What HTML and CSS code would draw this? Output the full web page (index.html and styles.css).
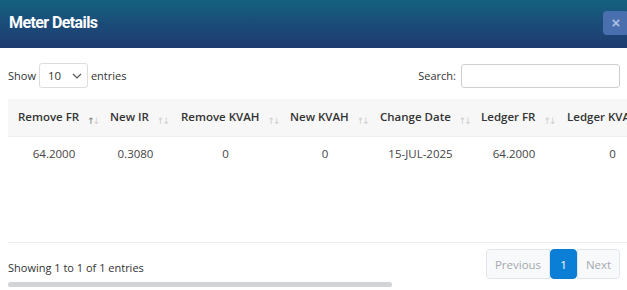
FILE: index.html
```html
<!DOCTYPE html>
<html lang="en">
<head>
    <meta charset="utf-8">
    <meta name="viewport" content="width=device-width, initial-scale=1">
    <title>Meter Details</title>
    <link rel="stylesheet" href="styles.css">
</head>
<body>
    <div class="modal">
        <header class="modal-header">
            <h1>Meter Details</h1>
            <button class="close-btn" type="button">&times;</button>
        </header>

        <div class="modal-body">
            <div class="dt-top">
                <label class="dt-length">Show
                    <span class="select-box">10
                        <svg width="10" height="6" viewBox="0 0 10 6"><path d="M1 1l4 4 4-4" fill="none" stroke="#555" stroke-width="1.2"/></svg>
                    </span>
                    entries</label>
                <label class="dt-search">Search: <span class="search-input"></span></label>
            </div>

            <div class="dt-scroll">
                <table class="meter-table">
                    <thead>
                        <tr>
                            <th>Remove FR <span class="sort"><b>↑</b>↓</span></th>
                            <th>New IR <span class="sort">↑↓</span></th>
                            <th>Remove KVAH <span class="sort">↑↓</span></th>
                            <th>New KVAH <span class="sort">↑↓</span></th>
                            <th>Change Date <span class="sort">↑↓</span></th>
                            <th>Ledger FR <span class="sort">↑↓</span></th>
                            <th>Ledger KVAH <span class="sort">↑↓</span></th>
                        </tr>
                    </thead>
                    <tbody>
                        <tr>
                            <td>64.2000</td>
                            <td>0.3080</td>
                            <td>0</td>
                            <td>0</td>
                            <td>15-JUL-2025</td>
                            <td>64.2000</td>
                            <td>0</td>
                        </tr>
                    </tbody>
                </table>
            </div>

            <div class="dt-bottom">
                <div class="dt-info">Showing 1 to 1 of 1 entries</div>
                <div class="pagination">
                    <span class="page-item disabled">Previous</span>
                    <span class="page-item active">1</span>
                    <span class="page-item disabled">Next</span>
                </div>
            </div>
            <div class="scroll-thumb"></div>
        </div>
    </div>
</body>
</html>
```

FILE: styles.css
```css
* { box-sizing: border-box; margin: 0; padding: 0; }
body { background: #fff; font-family: 'Open Sans', 'Noto Sans', sans-serif; font-size: 11px; color: #333; overflow: hidden; }
.modal { width: 627px; height: 290px; overflow: hidden; }

.modal-header { height: 48px; background: linear-gradient(180deg, #14617f 0%, #1b4a78 55%, #1f3b6f 100%); display: flex; align-items: center; justify-content: space-between; padding-left: 9px; }
.modal-header h1 { font-family: Roboto, sans-serif; font-size: 16px; font-weight: 700; color: #fff; letter-spacing: -0.6px; margin-top: -4px; }
.close-btn { width: 26px; height: 24px; margin-top: -2px; margin-right: -2px; border: none; border-radius: 4px; background: #4a6fae; color: #a9bfe2; font-size: 15px; line-height: 22px; font-weight: 700; font-family: Arial, 'Liberation Sans', sans-serif; }

.modal-body { padding: 15px 7px 0 8px; }
.dt-top { display: flex; justify-content: space-between; align-items: center; height: 25px; }
.dt-length { display: flex; align-items: center; gap: 3px; }
.select-box { display: inline-flex; align-items: center; gap: 11px; width: 49px; height: 25px; padding-left: 8px; border: 1px solid #dcdcdc; border-radius: 3px; font-size: 11.5px; }
.dt-search { display: flex; align-items: center; gap: 5px; }
.search-input { display: inline-block; width: 159px; height: 24px; border: 1px solid #cfcfcf; border-radius: 3px; }

.dt-scroll { margin-top: 11px; margin-right: -8px; height: 144px; overflow: hidden; border-bottom: 1px solid #ececec; }
.meter-table { border-collapse: collapse; table-layout: fixed; width: 660px; }
.meter-table th { background: #f7f7f7; text-align: left; padding: 0 0 0 10px; height: 37px; font-weight: 600; font-size: 11.5px; color: #333; white-space: nowrap; border-bottom: 1px solid #eeeeee; }
.meter-table th:nth-child(1) { width: 92px; }
.meter-table th:nth-child(2) { width: 71px; }
.meter-table th:nth-child(3) { width: 109px; }
.meter-table th:nth-child(4) { width: 90px; }
.meter-table th:nth-child(5) { width: 101px; }
.meter-table th:nth-child(6) { width: 86px; }
.meter-table th:nth-child(7) { width: 111px; }
.sort { font-family: 'DejaVu Sans', sans-serif; font-size: 9px; color: #cdcdcd; font-weight: 400; margin-left: 5px; letter-spacing: -2px; vertical-align: -3px; }
.sort b { color: #777; font-weight: 400; }
.meter-table td { text-align: center; height: 34px; padding: 0 8px; white-space: nowrap; color: #444; font-size: 11.5px; }

.dt-bottom { display: flex; justify-content: space-between; align-items: center; margin-top: 6px; }
.dt-info { padding-top: 7px; }
.pagination { display: flex; height: 30px; }
.page-item { display: flex; align-items: center; justify-content: center; padding: 0 12px; border: 1px solid #e2e6ea; background: #f8f9fa; color: #a3a9af; font-size: 11.5px; }
.page-item:first-child { border-radius: 4px 0 0 4px; width: 64px; }
.page-item:last-child { border-radius: 0 4px 4px 0; width: 43px; }
.page-item.active { background: #0b7fd5; border-color: #0b7fd5; color: #fff; border-radius: 4px; width: 27px; padding: 0; }
.scroll-thumb { width: 384px; height: 5px; margin-top: 3px; background: #d3d4d6; border-radius: 3px; }
```
